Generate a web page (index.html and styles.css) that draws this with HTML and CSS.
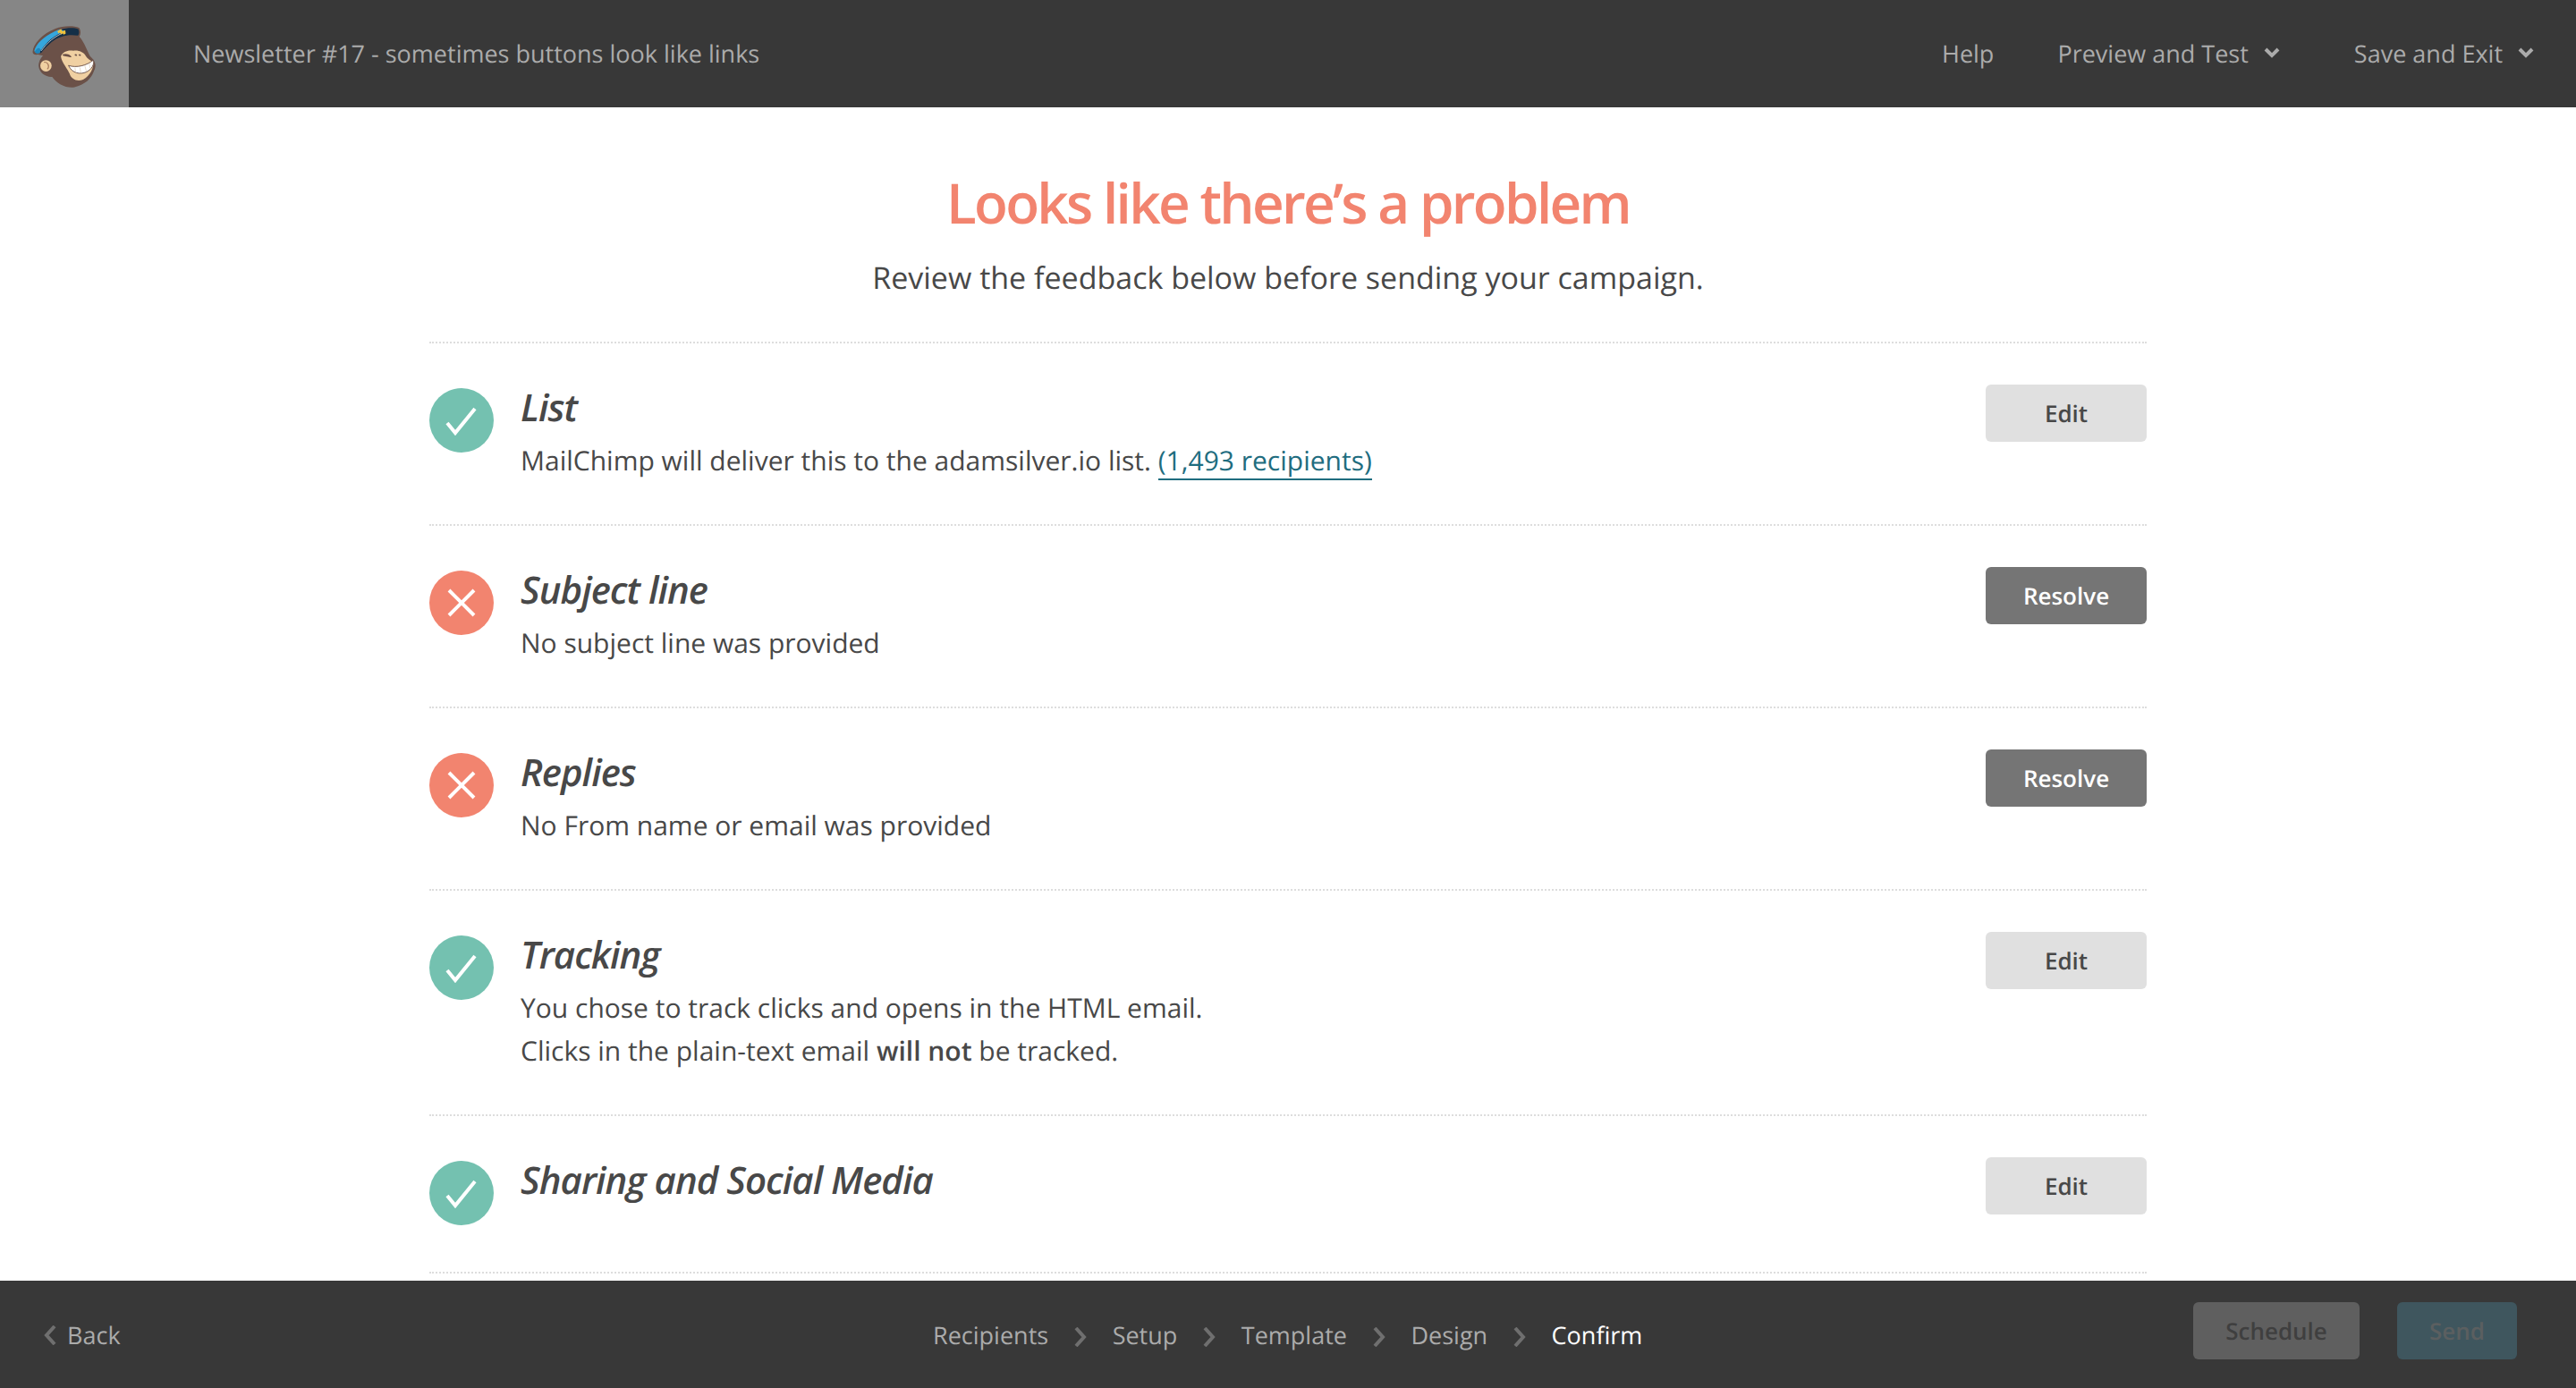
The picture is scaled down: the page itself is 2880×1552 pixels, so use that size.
FILE: index.html
```html
<!DOCTYPE html>
<html lang="en">
<head>
<meta charset="utf-8">
<title>Confirm</title>
<link rel="stylesheet" href="styles.css">
</head>
<body>
<div class="page">
  <header class="topbar">
    <div class="logo-box">
      <svg class="logo" viewBox="-90 -60 432 360" aria-hidden="true">
        <g transform="translate(6.8 12.2) scale(.91)">
        <path fill="#6b5148" d="M14 112C16 82 48 46 98 26C125 16 165 14 186 24C192 34 192 48 186 56C206 78 214 108 226 128C246 146 250 162 240 182C232 210 205 234 168 242C135 246 104 230 86 204C64 206 38 190 36 164C36 148 44 134 52 126L34 122C20 124 14 120 14 112Z"/>
        <path fill="#35a6dc" d="M20 108C26 84 52 56 96 36C104 33 112 30 120 29L136 36C105 45 68 72 44 110C38 118 22 118 20 108Z"/>
        <path fill="#1e86bd" d="M22 110C30 100 36 92 44 104L40 116C32 120 24 118 22 110Z"/>
        <path fill="#152f47" d="M118 30C142 22 168 22 182 28C186 36 186 46 181 52C150 46 112 52 84 76C68 90 54 104 44 118L41 112C62 76 96 48 136 35Z"/>
        <path fill="none" stroke="#dfe6ea" stroke-width="2.5" d="M46 108C66 78 96 54 134 38"/>
        <path fill="#f0c23a" d="M105 36L118 28L124 36L134 32L136 44L128 48L124 42L120 48L114 40L110 44Z"/>
        <path fill="#f0d0a2" d="M118 128C126 110 146 104 164 108C180 104 200 112 208 124C214 136 226 144 238 148C240 170 226 200 200 214C178 224 156 212 150 192C146 178 120 150 118 128Z"/>
        <path fill="#6b5148" d="M124 122C134 116 150 120 158 130C150 134 146 128 136 128C130 128 124 127 124 122ZM168 122C172 118 177 120 178 125C174 128 170 127 168 122ZM183 122C187 119 192 121 192 125C188 128 184 127 183 122Z"/>
        <path fill="#fff" stroke="#6b5148" stroke-width="3" d="M146 162C176 172 214 162 238 142C242 158 232 176 212 186C190 196 160 192 146 162Z"/>
        <path fill="none" stroke="#d9c3a8" stroke-width="2" d="M170 170L172 188M188 170L192 190M206 162L212 184M222 154L226 172"/>
        <circle cx="63" cy="163" r="21" fill="#f0d0a2"/>
        <path fill="none" stroke="#a5795c" stroke-width="4" d="M56 150C70 148 78 164 68 176"/>
        </g>
      </svg>
    </div>
    <div class="campaign">Newsletter #17 - sometimes buttons look like links</div>
    <nav class="topnav">
      <a class="topnav-link">Help</a>
      <a class="topnav-link">Preview and Test
        <svg class="caret" viewBox="0 0 18 14"><path d="M2 3l7 7 7-7" /></svg>
      </a>
      <a class="topnav-link topnav-save">Save and Exit
        <svg class="caret" viewBox="0 0 18 14"><path d="M2 3l7 7 7-7" /></svg>
      </a>
    </nav>
  </header>

  <main class="content">
    <h1 class="title">Looks like there’s a problem</h1>
    <p class="subtitle">Review the feedback below before sending your campaign.</p>
    <ul class="checklist">
      <li class="item">
        <span class="status status-ok"><svg viewBox="0 0 72 72"><path d="M20 39l9 11 22-27"/></svg></span>
        <div class="item-body">
          <h2 class="item-title">List</h2>
          <p class="item-text">MailChimp will deliver this to the adamsilver.io list. <a class="link">(1,493 recipients)</a></p>
        </div>
        <a class="btn btn-light">Edit</a>
      </li>
      <li class="item">
        <span class="status status-bad"><svg viewBox="0 0 72 72"><path d="M22 22l28 28M50 22L22 50"/></svg></span>
        <div class="item-body">
          <h2 class="item-title">Subject line</h2>
          <p class="item-text">No subject line was provided</p>
        </div>
        <a class="btn btn-dark">Resolve</a>
      </li>
      <li class="item">
        <span class="status status-bad"><svg viewBox="0 0 72 72"><path d="M22 22l28 28M50 22L22 50"/></svg></span>
        <div class="item-body">
          <h2 class="item-title">Replies</h2>
          <p class="item-text">No From name or email was provided</p>
        </div>
        <a class="btn btn-dark">Resolve</a>
      </li>
      <li class="item item-tall">
        <span class="status status-ok"><svg viewBox="0 0 72 72"><path d="M20 39l9 11 22-27"/></svg></span>
        <div class="item-body">
          <h2 class="item-title">Tracking</h2>
          <p class="item-text">You chose to track clicks and opens in the HTML email.<br>Clicks in the plain-text email <strong>will not</strong> be tracked.</p>
        </div>
        <a class="btn btn-light">Edit</a>
      </li>
      <li class="item item-short">
        <span class="status status-ok"><svg viewBox="0 0 72 72"><path d="M20 39l9 11 22-27"/></svg></span>
        <div class="item-body">
          <h2 class="item-title">Sharing and Social Media</h2>
        </div>
        <a class="btn btn-light">Edit</a>
      </li>
    </ul>
  </main>

  <footer class="bottombar">
    <a class="back">
      <svg class="back-arrow" viewBox="0 0 14 22"><path d="M12 1L3 11l9 10"/></svg>
      Back
    </a>
    <ol class="steps">
      <li class="step">Recipients</li>
      <li class="step-sep"><svg viewBox="0 0 14 22"><path d="M2 1l9 10-9 10"/></svg></li>
      <li class="step">Setup</li>
      <li class="step-sep"><svg viewBox="0 0 14 22"><path d="M2 1l9 10-9 10"/></svg></li>
      <li class="step">Template</li>
      <li class="step-sep"><svg viewBox="0 0 14 22"><path d="M2 1l9 10-9 10"/></svg></li>
      <li class="step">Design</li>
      <li class="step-sep"><svg viewBox="0 0 14 22"><path d="M2 1l9 10-9 10"/></svg></li>
      <li class="step step-current">Confirm</li>
    </ol>
    <div class="actions">
      <a class="btn btn-schedule">Schedule</a>
      <a class="btn btn-send">Send</a>
    </div>
  </footer>
</div>
</body>
</html>
```
FILE: styles.css
```css
* { box-sizing: border-box; }
html, body { margin: 0; height: 100%; }
body {
  font-family: "Open Sans", "Noto Sans", sans-serif;
  color: #484848;
  background: #fff;
  overflow: hidden;
  text-rendering: geometricPrecision;
}
a { text-decoration: none; }
ul, ol { list-style: none; margin: 0; padding: 0; }

.page { height: 100vh; display: flex; flex-direction: column; }

.topbar {
  flex: 0 0 120px;
  display: flex;
  align-items: center;
  background: #383838;
  color: #ababab;
  font-size: 27px;
}
.logo-box {
  flex: 0 0 144px;
  height: 120px;
  background: #868686;
}
.logo { display: block; width: 144px; height: 120px; }
.campaign { margin-left: 72px; margin-bottom: 2px; }
.topnav { margin-left: auto; margin-bottom: 2px; display: flex; align-items: center; padding-right: 47px; gap: 71px; }
.topnav-link { display: flex; align-items: center; gap: 17px; color: #ababab; }
.topnav-save { margin-left: 12px; }
.caret { width: 18px; height: 14px; fill: none; stroke: #ababab; stroke-width: 4; }

.content { flex: 1; min-height: 0; overflow: hidden; width: 1920px; margin: 0 auto; }
.title {
  margin: 67px 0 0;
  text-align: center;
  font-size: 62px;
  line-height: 80px;
  font-weight: 600;
  letter-spacing: -2.7px;
  color: #f2846f;
}
.subtitle {
  margin: 18px 0 0;
  text-align: center;
  font-size: 34px;
  line-height: 50px;
  color: #484848;
}
.checklist { margin-top: 47px; border-top: 2px dotted #ddd; }
.item {
  display: flex;
  align-items: flex-start;
  height: 204px;
  padding-top: 46px;
  border-bottom: 2px dotted #ddd;
}
.item-tall { height: 252px; }
.item-short { height: 176px; }
.status {
  flex: 0 0 72px;
  width: 72px;
  height: 72px;
  margin-top: 4px;
  border-radius: 50%;
}
.status svg { display: block; width: 72px; height: 72px; fill: none; stroke: #fff; stroke-width: 4; }
.status-ok { background: #74c1b0; }
.status-bad { background: #f2846f; }
.item-body { flex: 1; margin-left: 30px; }
.item-title {
  margin: 2px 0 0;
  font-size: 42px;
  line-height: 48px;
  font-style: italic;
  font-weight: 600;
  letter-spacing: -1px;
  color: #484848;
}
.item-text { margin: 11px 0 0; font-size: 30px; line-height: 48px; color: #484848; }
.item-text strong { font-weight: 600; }
.link { color: #1f6d7f; border-bottom: 2px solid #1f6d7f; }

.btn {
  display: flex;
  align-items: center;
  justify-content: center;
  height: 64px;
  border-radius: 6px;
  font-size: 26px;
  font-weight: 600;
}
.btn-light { flex: 0 0 180px; background: #e0e0e0; color: #484848; }
.btn-dark { flex: 0 0 180px; background: #757575; color: #fff; }

.bottombar {
  flex: 0 0 120px;
  position: relative;
  display: flex;
  align-items: center;
  background: #383838;
  color: #ababab;
  font-size: 27px;
}
.back { display: flex; align-items: center; gap: 12px; margin-left: 49px; color: #ababab; margin-top: 1px; }
.back-arrow, .step-sep svg { display: block; width: 14px; height: 22px; fill: none; stroke: #6f6f6f; stroke-width: 4; }
.steps {
  position: absolute;
  left: 1043px;
  top: 0;
  height: 120px;
  display: flex;
  align-items: center;
  padding-top: 1px;
}
.step { color: #ababab; }
.step-sep { margin: 4px 28.5px 0 29px; }
.step-current { color: #fff; font-weight: 500; }
.actions { margin-left: auto; margin-bottom: 8px; display: flex; gap: 42px; padding-right: 66px; }
.btn-schedule { width: 186px; background: #5f5f5f; color: #3f3f3f; }
.btn-send { width: 134px; background: #3f565e; color: #5b5f60; }
```
